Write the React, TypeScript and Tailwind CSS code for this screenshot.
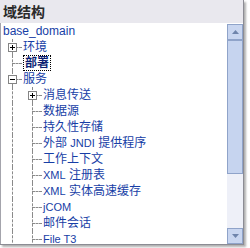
import React from 'react';

type Node = {
  label: React.ReactNode;
  level: number;
  box?: 'plus' | 'minus';
  selected?: boolean;
};

const L = ({ children }: { children: React.ReactNode }) => (
  <span className="text-[11px]">{children}</span>
);

const rows: Node[] = [
  { label: '环境', level: 1, box: 'plus' },
  { label: '部署', level: 1, selected: true },
  { label: '服务', level: 1, box: 'minus' },
  { label: '消息传送', level: 2, box: 'plus' },
  { label: '数据源', level: 2 },
  { label: '持久性存储', level: 2 },
  { label: <>外部 <L>JNDI</L> 提供程序</>, level: 2 },
  { label: '工作上下文', level: 2 },
  { label: <><L>XML</L> 注册表</>, level: 2 },
  { label: <><L>XML</L> 实体高速缓存</>, level: 2 },
  { label: <L>jCOM</L>, level: 2 },
  { label: '邮件会话', level: 2 },
  { label: <L>File T3</L>, level: 2 },
];

function Box({ kind }: { kind: 'plus' | 'minus' }) {
  return (
    <div className="absolute left-[6px] top-[4px] w-[9px] h-[9px] border border-[#848484] bg-white flex items-center justify-center z-10">
      <div className="relative w-[5px] h-[5px]">
        <div className="absolute left-0 top-[2px] w-[5px] h-[1px] bg-black" />
        {kind === 'plus' && <div className="absolute left-[2px] top-0 w-[1px] h-[5px] bg-black" />}
      </div>
    </div>
  );
}

function Row({ node }: { node: Node }) {
  const cells = [];
  for (let i = 1; i < node.level; i++) {
    cells.push(
      <div key={i} className="relative w-[20px] h-full shrink-0">
        <div className="absolute left-[10px] top-0 h-full border-l border-dashed border-[#8a8a8a]" />
      </div>
    );
  }
  return (
    <div className="flex h-[16px] items-center">
      {cells}
      <div className="relative w-[20px] h-full shrink-0">
        <div className="absolute left-[10px] top-0 h-full border-l border-dashed border-[#8a8a8a]" />
        <div className="absolute left-[10px] top-[8px] w-[10px] border-t border-dashed border-[#8a8a8a]" />
        {node.box && <Box kind={node.box} />}
      </div>
      {node.selected ? (
        <span className="ml-[1px] px-[1px] leading-[14px] border border-dotted border-black font-bold text-[#0c1f73]">
          {node.label}
        </span>
      ) : (
        <span className="ml-[1px] whitespace-nowrap text-[#173ea6]">{node.label}</span>
      )}
    </div>
  );
}

function Arrow({ up }: { up?: boolean }) {
  return (
    <div className="h-[16px] border border-[#8fa3c9] bg-[#c9d6f0] flex items-center justify-center">
      <svg width="7" height="4" viewBox="0 0 7 4">
        {up ? <path d="M0 4 L3.5 0 L7 4 Z" fill="#6f84ab" /> : <path d="M0 0 L3.5 4 L7 0 Z" fill="#6f84ab" />}
      </svg>
    </div>
  );
}

export default function App() {
  return (
    <div className="w-[250px] h-[248px] bg-white overflow-hidden" style={{ fontFamily: '"Liberation Sans", "Noto Sans CJK SC", sans-serif' }}>
      <div className="w-[244px] h-[245px] flex flex-col border-r border-b border-[#8c8c94] shadow-[2px_2px_2px_#b0b0b0]">
        <div className="h-[23px] shrink-0 bg-[#e9e8ee] flex items-center pl-[3px] pt-[1px]">
          <span className="text-[14px] font-bold text-[#2a2a2a]">域结构</span>
        </div>
        <div className="flex flex-1 min-h-0 border-l border-[#a4a4ac]">
          <div className="flex-1 overflow-hidden pl-[1px] text-[12px] leading-[16px]">
            <div className="h-[16px] flex items-center pl-[1px] text-[#173ea6]">
              <span className="text-[12px]">base_domain</span>
            </div>
            {rows.map((r, i) => (
              <Row key={i} node={r} />
            ))}
          </div>
          <div className="w-[16px] shrink-0 flex flex-col bg-[#eef0f8] mt-[1px]">
            <Arrow up />
            <div className="h-[134px] border border-[#8fa3c9] bg-[#c6d4ef]" />
            <div className="flex-1" />
            <Arrow />
          </div>
        </div>
      </div>
    </div>
  );
}
